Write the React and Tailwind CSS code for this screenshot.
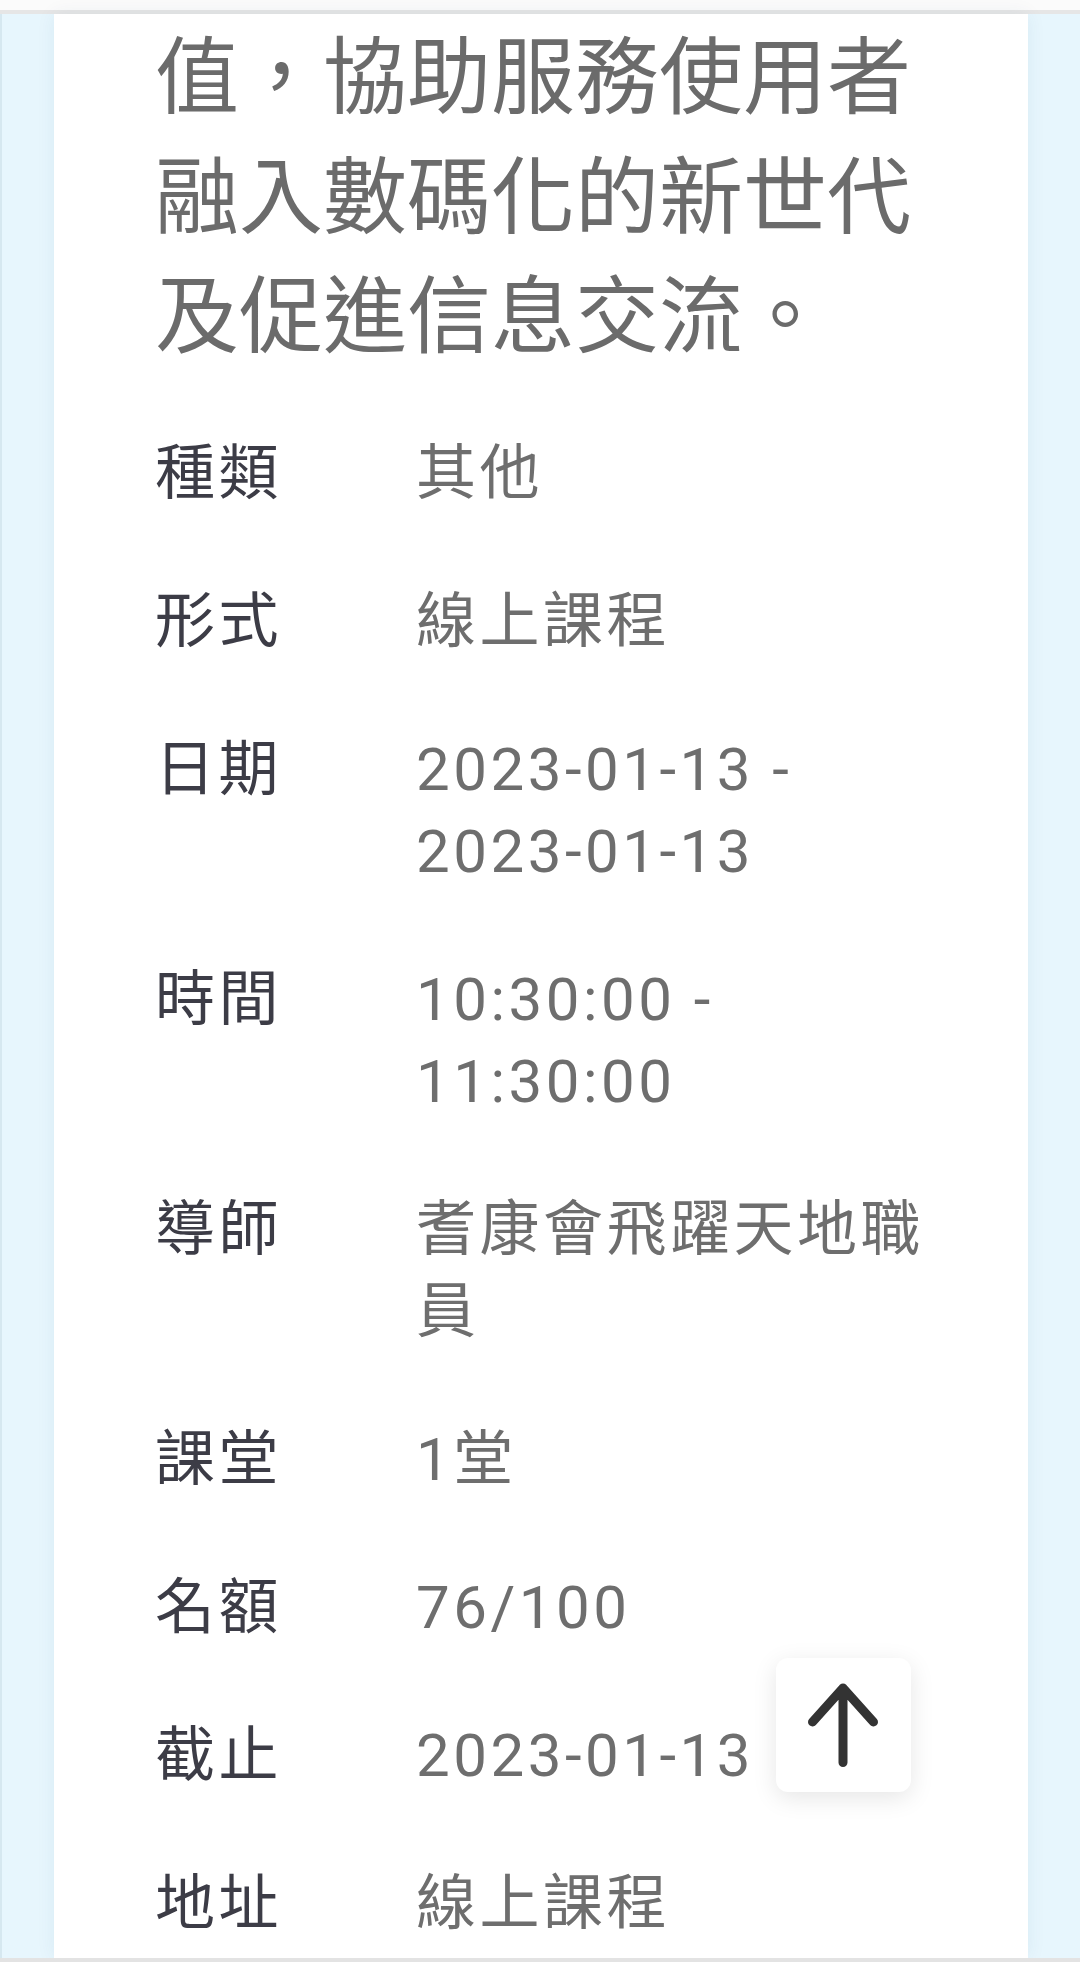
import React from "react";

const rows = [
  ["種類", "其他"],
  ["形式", "線上課程"],
  ["日期", "2023-01-13 - 2023-01-13"],
  ["時間", "10:30:00 - 11:30:00"],
  ["導師", "耆康會飛躍天地職員"],
  ["課堂", "1堂"],
  ["名額", "76/100"],
  ["截止", "2023-01-13"],
  ["地址", "線上課程"],
];

const font = { fontFamily: '"Roboto", "Noto Sans CJK TC", sans-serif' };

export default function App() {
  return (
    <div
      className="relative w-[1080px] h-[1962px] overflow-hidden bg-white flex flex-col"
      style={font}
    >
      <div className="h-[10px] shrink-0 bg-[#fbfbfb]" />
      <div className="h-[4px] shrink-0 bg-[#e6e6e6]" />
      <div className="flex-1 min-h-0 flex bg-[#e7f6fd] px-[52px] border-l-2 border-[#d6e8f0]">
        <div className="flex-1 bg-white pl-[101px] pr-[100px] shadow-[0_0_18px_rgba(0,70,110,0.07)]">
          <p className="-mt-[3px] text-[84px] leading-[119.5px] text-[#6b6b6b] font-['Noto_Sans_CJK_TC',sans-serif]">
            值，協助服務使用者融入數碼化的新世代及促進信息交流。
          </p>
          <div className="mt-[63px] flex flex-col gap-[66px]">
            {rows.map(([k, v]) => (
              <div key={k} className="flex text-[60px] leading-[82px] tracking-[3.5px]">
                <div className="w-[261px] shrink-0 text-[#3c3c46] font-normal">{k}</div>
                <div className="flex-1 min-w-0 text-[#6e6e6e]">{v}</div>
              </div>
            ))}
          </div>
        </div>
      </div>
      <div className="h-[4px] shrink-0 bg-[#e3e3e3]" />

      <button className="absolute left-[776px] top-[1658px] w-[135px] h-[134px] rounded-[12px] bg-white shadow-[0_6px_24px_rgba(0,0,0,0.10)] flex items-center justify-center">
        <svg width="135" height="134" viewBox="0 0 135 134" fill="none">
          <path
            d="M67 30 V104.5 M36.5 64 L67 30 L97.5 64"
            stroke="#333333"
            strokeWidth="9"
            strokeLinecap="round"
            strokeLinejoin="round"
          />
        </svg>
      </button>
    </div>
  );
}
